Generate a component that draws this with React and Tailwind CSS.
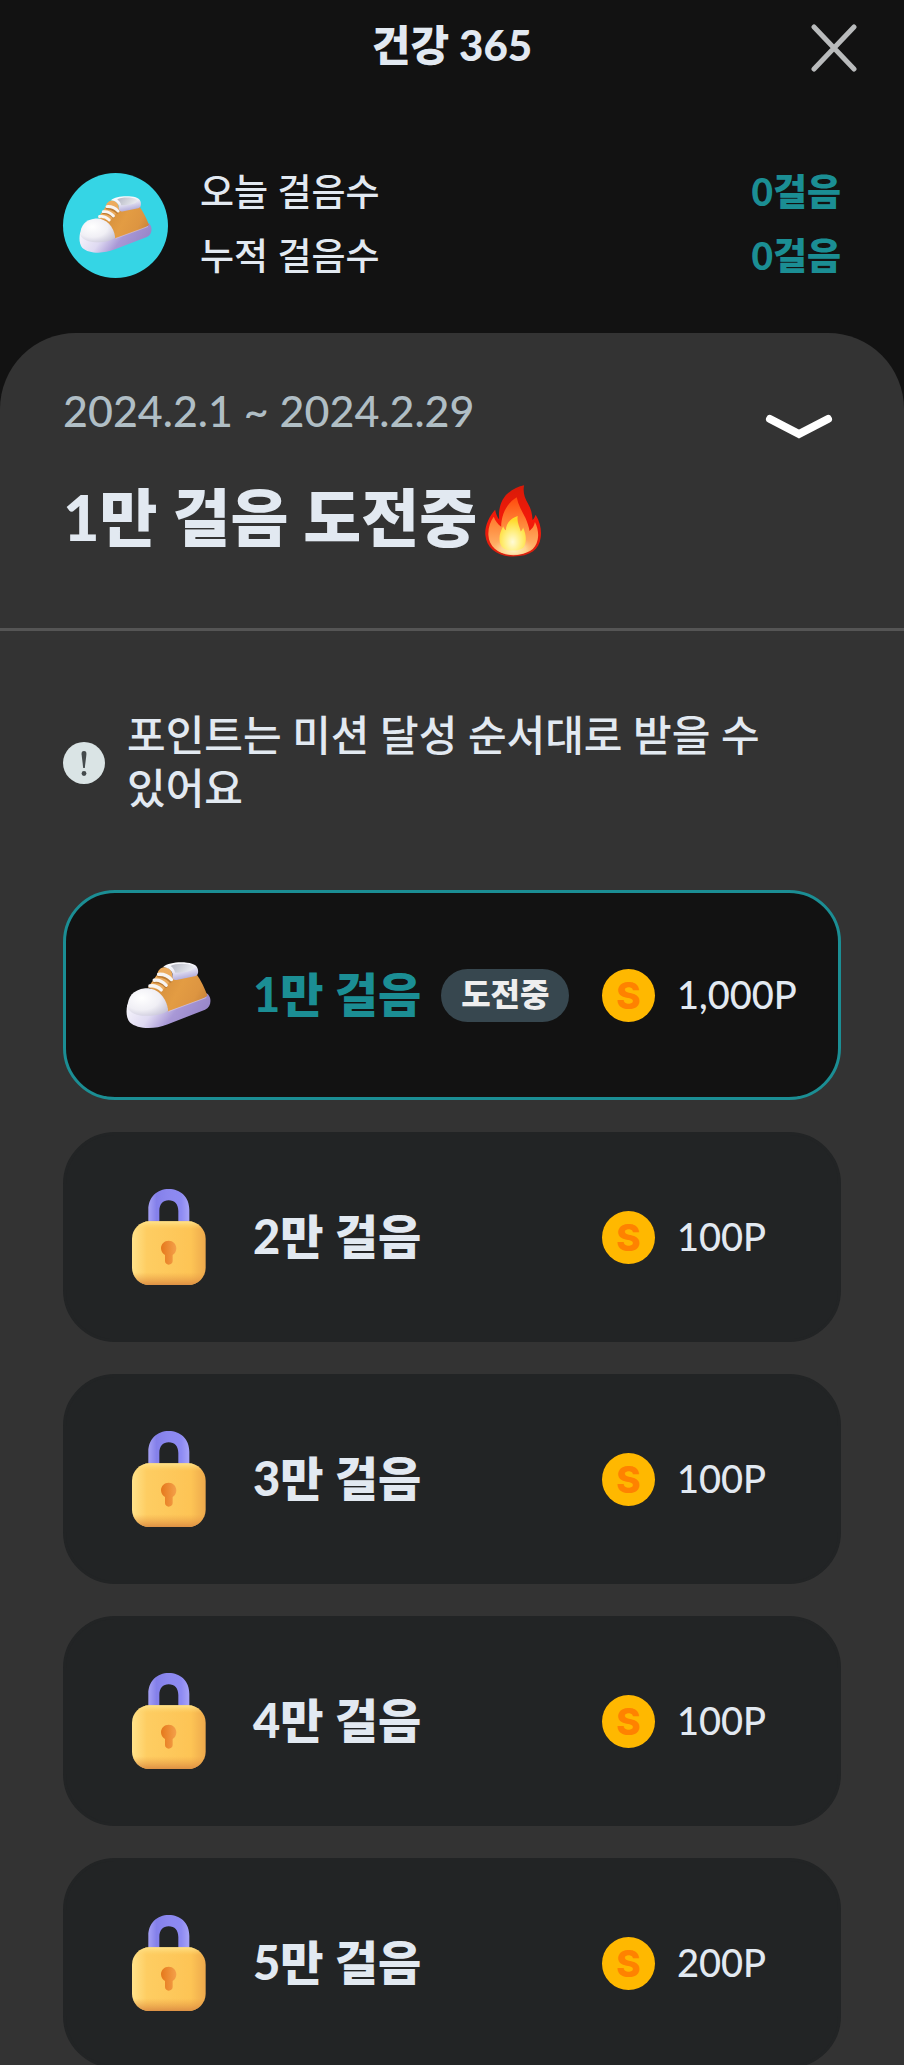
import React from "react";

const missions = [
  { id: 1, title: "1만 걸음", points: "1,000P", active: true },
  { id: 2, title: "2만 걸음", points: "100P" },
  { id: 3, title: "3만 걸음", points: "100P" },
  { id: 4, title: "4만 걸음", points: "100P" },
  { id: 5, title: "5만 걸음", points: "200P" },
];

function ShoeIcon({ id, className }) {
  return (
    <svg viewBox="0 0 256 200" className={className} aria-hidden="true">
      <defs>
        <linearGradient id={`${id}-sole`} x1="0" y1="0.3" x2="1" y2="0.6">
          <stop offset="0" stopColor="#f8f7fc" />
          <stop offset="0.35" stopColor="#dfdaf2" />
          <stop offset="0.6" stopColor="#a898d6" />
          <stop offset="1" stopColor="#9482c6" />
        </linearGradient>
        <radialGradient id={`${id}-toe`} cx="0.35" cy="0.35" r="0.8">
          <stop offset="0" stopColor="#ffffff" />
          <stop offset="0.55" stopColor="#f0eff5" />
          <stop offset="1" stopColor="#c4c1d6" />
        </radialGradient>
        <linearGradient id={`${id}-body`} x1="0" y1="0.3" x2="1" y2="0.7">
          <stop offset="0" stopColor="#d08a3a" />
          <stop offset="0.5" stopColor="#e39c43" />
          <stop offset="0.8" stopColor="#dd9541" />
          <stop offset="1" stopColor="#c98439" />
        </linearGradient>
        <linearGradient id={`${id}-collar`} x1="0" y1="0" x2="0.4" y2="1">
          <stop offset="0" stopColor="#ffffff" />
          <stop offset="0.5" stopColor="#f1f0f8" />
          <stop offset="1" stopColor="#b4aedb" />
        </linearGradient>
        <linearGradient id={`${id}-inner`} x1="0" y1="0" x2="1" y2="0.3">
          <stop offset="0" stopColor="#b4b6c2" />
          <stop offset="1" stopColor="#e6e8ee" />
        </linearGradient>
      </defs>
      <path
        d="M4 128C0 146 0 168 12 182C34 202 84 204 124 188L238 144C252 138 257 122 253 108C250 99 245 93 238 94L120 140Z"
        fill={`url(#${id}-sole)`}
      />
      <path
        d="M72 82L98 40C98 24 106 17 122 18L142 46L213 38C226 56 237 80 245 101C240 107 232 110 224 114L126 149C122 116 106 92 72 82Z"
        fill={`url(#${id}-body)`}
      />
      <path d="M94 38C96 20 112 12 126 18C138 24 142 34 138 52L110 86L66 77Z" fill="#ecac5e" />
      <path
        d="M4 136C6 104 20 84 58 79C92 76 122 104 127 146C112 158 84 163 58 162C32 161 10 152 4 136Z"
        fill={`url(#${id}-toe)`}
      />
      <path d="M128 149L242 107" fill="none" stroke="#d9d0ec" strokeWidth="3" opacity="0.6" />
      <path
        d="M112 15C126 3 156 -1 184 2C208 4 219 14 217 32C216 40 210 42 203 44L152 54C142 56 138 48 140 36C138 24 124 16 112 15Z"
        fill={`url(#${id}-collar)`}
      />
      <path
        d="M134 12C148 4 186 3 202 12C207 19 198 26 182 29C168 32 156 33 148 32C146 24 142 17 134 12Z"
        fill={`url(#${id}-inner)`}
      />
      <g fill="none" strokeLinecap="round" strokeWidth="10">
        <g stroke="#bd7c33">
          <path d="M98 42C112 42 124 48 134 57" />
          <path d="M86 59C98 58 111 64 120 73" />
        </g>
        <g stroke="#f7f5f3">
          <path d="M98 37C112 36 127 42 137 53" />
          <path d="M85 55C98 53 112 60 121 70" />
          <path d="M72 72C84 70 97 75 106 84" />
        </g>
      </g>
    </svg>
  );
}

function LockIcon({ id, className }) {
  return (
    <svg viewBox="0 0 222 288" className={className} aria-hidden="true">
      <defs>
        <linearGradient id={`${id}-shackle`} x1="0" y1="0" x2="1" y2="0">
          <stop offset="0" stopColor="#a5a0f5" />
          <stop offset="0.2" stopColor="#8480ea" />
          <stop offset="0.5" stopColor="#8c88ef" />
          <stop offset="0.8" stopColor="#8d8af2" />
          <stop offset="1" stopColor="#a8a4f8" />
        </linearGradient>
        <linearGradient id={`${id}-face`} x1="0" y1="0" x2="1" y2="0">
          <stop offset="0" stopColor="#ffe28a" />
          <stop offset="0.2" stopColor="#fecd62" />
          <stop offset="0.8" stopColor="#fdc455" />
          <stop offset="1" stopColor="#eda94c" />
        </linearGradient>
        <linearGradient id={`${id}-shade`} x1="0" y1="0" x2="0" y2="1">
          <stop offset="0" stopColor="#ffe590" stopOpacity="0.9" />
          <stop offset="0.12" stopColor="#ffd870" stopOpacity="0" />
          <stop offset="0.8" stopColor="#ec9d44" stopOpacity="0" />
          <stop offset="1" stopColor="#d98a42" stopOpacity="0.9" />
        </linearGradient>
        <linearGradient id={`${id}-hole`} x1="0" y1="0" x2="1" y2="0">
          <stop offset="0" stopColor="#e5781c" />
          <stop offset="1" stopColor="#f4a04a" />
        </linearGradient>
      </defs>
      <path
        d="M49 108V62C49 24 76 0 110 0C145 0 172 24 172 62V108H139V66C139 46 128 34 110 34C93 34 82 46 82 66V108Z"
        fill={`url(#${id}-shackle)`}
      />
      <rect y="97" width="221" height="191" rx="52" fill={`url(#${id}-face)`} />
      <rect y="97" width="221" height="191" rx="52" fill={`url(#${id}-shade)`} />
      <path
        d="M110 155C97 155 87 165 87 178C87 187 92 194 99 198V216C99 222 104 227 110 227C117 227 122 222 122 216V198C129 194 133 187 133 178C133 165 123 155 110 155Z"
        fill={`url(#${id}-hole)`}
      />
    </svg>
  );
}

function FireIcon({ className }) {
  return (
    <svg viewBox="50 46 166 212" className={className} role="img" aria-label="불꽃">
      <defs>
        <linearGradient id="fire-outer" x1="0" y1="0" x2="0" y2="1">
          <stop offset="0" stopColor="#d81a08" />
          <stop offset="0.5" stopColor="#f51a0a" />
          <stop offset="1" stopColor="#d9200f" />
        </linearGradient>
        <linearGradient id="fire-mid" x1="0" y1="0" x2="0" y2="1">
          <stop offset="0" stopColor="#ff4a0c" />
          <stop offset="0.5" stopColor="#ff8a3c" />
          <stop offset="1" stopColor="#ffc07a" />
        </linearGradient>
        <radialGradient id="fire-core" cx="0.5" cy="0.75" r="0.65">
          <stop offset="0" stopColor="#fffbd6" />
          <stop offset="0.5" stopColor="#ffee7c" />
          <stop offset="1" stopColor="#ffd928" />
        </radialGradient>
        <radialGradient id="fire-glow" cx="0.5" cy="0.8" r="0.5">
          <stop offset="0" stopColor="#fff6c8" />
          <stop offset="0.6" stopColor="#ffe09a" stopOpacity="0.7" />
          <stop offset="1" stopColor="#ffc07a" stopOpacity="0" />
        </radialGradient>
      </defs>
      <path
        d="M166 47C162 64 166 84 178 102C186 116 190 130 191 150C195 146 198 140 200 134C214 156 218 182 215 202C211 238 184 258 134 258C86 258 54 232 51 194C49 166 62 140 80 119C82 130 86 140 92 148C90 122 94 98 112 76C128 60 148 50 166 47Z"
        fill="url(#fire-outer)"
      />
      <path
        d="M144 82C148 104 160 124 170 144C176 158 180 170 182 182C190 176 196 168 198 156C206 172 210 192 206 208C200 238 176 252 134 252C92 252 62 232 60 194C59 172 66 154 76 140C80 152 88 162 98 170C98 134 114 100 144 82Z"
        fill="url(#fire-mid)"
      />
      <ellipse cx="134" cy="214" rx="62" ry="40" fill="url(#fire-glow)" />
      <path
        d="M147 138C144 156 152 168 156 184C160 180 162 176 163 172C172 192 174 212 166 228C158 244 108 246 98 226C88 206 94 186 104 168C106 174 108 178 112 180C112 160 126 144 147 138Z"
        fill="url(#fire-core)"
      />
    </svg>
  );
}

function StepRow({ label, value }) {
  return (
    <div className="flex items-center justify-between">
      <dt className="font-medium text-[#e2e9f1]">{label}</dt>
      <dd className="font-black text-[#1b8e94]">{value}</dd>
    </div>
  );
}

function MissionCard({ mission }) {
  const { id, title, points, active } = mission;
  return (
    <li
      className={
        "flex h-[210px] shrink-0 items-center rounded-[52px] border-3 pl-[60px] " +
        (active ? "border-[#1b8e94] bg-[#121212]" : "border-[#222425] bg-[#222425]")
      }
    >
      <div className="flex w-[85px] shrink-0 justify-center">
        {active ? (
          <ShoeIcon id="mission-shoe" className="w-[85px]" />
        ) : (
          <LockIcon id={`lock-${id}`} className="w-[74px]" />
        )}
      </div>
      <div className="ml-[42px] flex flex-1 items-center gap-5 whitespace-nowrap">
        <h3
          className={
            "pb-[3px] text-[47px] leading-[60px] font-black " +
            (active ? "text-[#1b8e94]" : "text-[#e2e9f1]")
          }
        >
          {title}
        </h3>
        {active && (
          <span className="flex h-[53px] items-center rounded-full bg-[#37474f] px-5 pb-[3px] text-[32px] leading-[48px] font-black text-[#eeeeee]">
            도전중
          </span>
        )}
      </div>
      <div className="flex w-[236px] shrink-0 items-center gap-[22px]">
        <span className="flex size-[53px] shrink-0 items-center justify-center rounded-full bg-[#ffb800] font-[Inter,sans-serif] text-[37px] leading-none font-extrabold text-[#ff8200]">
          S
        </span>
        <span className="pb-[3px] text-[38px] leading-[52px] font-medium text-[#e2e9f1]">{points}</span>
      </div>
    </li>
  );
}

export default function App() {
  return (
    <div className="flex h-screen flex-col bg-[#121212] font-[Lato,'Noto_Sans_CJK_KR',sans-serif]">
      <header className="grid h-24 shrink-0 grid-cols-[1fr_auto_1fr] items-center px-[47px]">
        <h1 className="col-start-2 pb-[6px] text-[42px] leading-[60px] font-black text-[#e2e9f1]">건강 365</h1>
        <button type="button" aria-label="닫기" className="justify-self-end">
          <svg viewBox="0 0 46 48" className="w-[46px]" fill="none" stroke="#b9bbbc" strokeWidth="5" strokeLinecap="round">
            <path d="M3 3L43 45M43 3L3 45" />
          </svg>
        </button>
      </header>

      <section className="flex shrink-0 items-center gap-8 px-[63px] pt-16 pb-[43px]">
        <div className="flex size-[105px] shrink-0 items-center justify-center rounded-full bg-[#35d5e5]">
          <ShoeIcon id="summary-shoe" className="w-[73px]" />
        </div>
        <dl className="flex flex-1 flex-col pb-[2px] text-[37px] leading-[64px]">
          <StepRow label="오늘 걸음수" value="0걸음" />
          <StepRow label="누적 걸음수" value="0걸음" />
        </dl>
      </section>

      <main className="min-h-0 flex-1 overflow-y-auto rounded-t-[76px] bg-[#333333] [scrollbar-width:none]">
        <div className="flex items-start justify-between border-b-3 border-[#555555] px-[63px] pt-12 pb-[67px]">
          <div>
            <p className="text-[43px] leading-[60px] font-medium text-[#b0bec5]">2024.2.1 ~ 2024.2.29</p>
            <h2 className="mt-8 flex items-center gap-2 text-[63px] leading-[88px] font-black text-[#e2e9f1]">
              1만 걸음 도전중
              <FireIcon className="mt-2 w-[56px]" />
            </h2>
          </div>
          <button type="button" aria-label="펼치기" className="mt-8 mr-2">
            <svg viewBox="0 0 68 28" className="w-[68px]" fill="none" stroke="#ffffff" strokeWidth="8" strokeLinecap="round">
              <path d="M5 6L34 21L63 6" />
            </svg>
          </button>
        </div>

        <div className="px-[63px] pt-[78px] pb-8">
          <div className="flex items-center gap-[22px]">
            <svg viewBox="0 0 42 42" className="w-[42px] shrink-0" aria-hidden="true">
              <circle cx="21" cy="21" r="21" fill="#dae4e5" />
              <path d="M21 9C18.900 9 18.400 10.500 18.600 12.500L20.200 26H21.800L23.400 12.500C23.600 10.500 23.100 9 21 9Z" fill="#444a4c" />
              <circle cx="21" cy="31.500" r="2.400" fill="#444a4c" />
            </svg>
            <p className="pr-[40px] pb-[2px] text-[42px] leading-[53px] font-medium break-keep text-[#e2e9f1]">
              포인트는 미션 달성 순서대로 받을 수 있어요
            </p>
          </div>
          <ul className="mt-[73px] flex flex-col gap-8">
            {missions.map((m) => (
              <MissionCard key={m.id} mission={m} />
            ))}
          </ul>
        </div>
      </main>
    </div>
  );
}
